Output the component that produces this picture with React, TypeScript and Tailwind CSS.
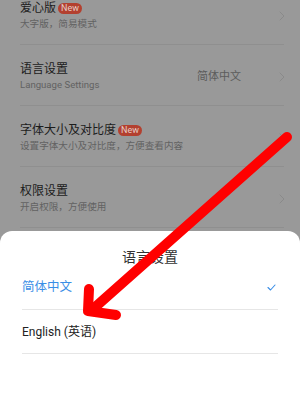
import React from 'react';

type Row = {
  title: string;
  sub: string;
  badge?: boolean;
  value?: string;
};

const rows: Row[] = [
  { title: '爱心版', sub: '大字版，简易模式', badge: true },
  { title: '语言设置', sub: 'Language Settings', value: '简体中文' },
  { title: '字体大小及对比度', sub: '设置字体大小及对比度，方便查看内容', badge: true },
  { title: '权限设置', sub: '开启权限，方便使用' },
];

function Chevron() {
  return (
    <svg width="6" height="10" viewBox="0 0 6 10" fill="none" className="shrink-0">
      <path d="M1 1l4 4-4 4" stroke="#8a8a8a" strokeWidth="1" strokeLinecap="round" strokeLinejoin="round" />
    </svg>
  );
}

function SettingRow({ row, first }: { row: Row; first: boolean }) {
  return (
    <div
      className={`flex items-center border-b border-[#8f8f8f] pb-[13px] ${first ? 'pt-[1px]' : 'pt-[17px]'}`}>
      <div className="flex-1 min-w-0">
        <div className="flex items-center h-[14px]">
          <span className="text-[12px] leading-[14px] text-[#1c1c1c]">{row.title}</span>
          {row.badge && (
            <span className="ml-[2px] h-[11px] px-[3px] rounded-full bg-[#b3402f] text-[#e6cdc6] text-[9px] leading-[11px]">
              New
            </span>
          )}
        </div>
        <div className="mt-[2px] text-[9.6px] leading-[14px] text-[#626262]">{row.sub}</div>
      </div>
      {row.value && (
        <span className="mr-[38px] text-[11px] text-[#5c5c5c]">{row.value}</span>
      )}
      <div className="-mr-[1px]">
        <Chevron />
      </div>
    </div>
  );
}

export default function App() {
  return (
    <div
      className="relative w-[300px] h-[400px] overflow-hidden bg-[#999999] flex flex-col"
      style={{ fontFamily: 'Roboto, "Noto Sans CJK SC", sans-serif' }}>
      <div className="pl-[20px] pr-[16px]">
        {rows.map((r, i) => (
          <SettingRow key={r.title} row={r} first={i === 0} />
        ))}
      </div>

      <div className="mt-[3px] flex-1 bg-white rounded-t-[12px] pt-[19px] px-[22px]">
        <div className="text-center text-[14px] leading-[14px] text-[#333]">语言设置</div>
        <div className="mt-[2px] h-[44px] flex items-center justify-between border-b border-[#e6e6e6]">
          <span className="text-[12.5px] text-[#3a8ee6]">简体中文</span>
          <svg width="9" height="7" viewBox="0 0 9 7" fill="none" className="mr-[2px]">
            <path d="M1 3.5l2.5 2.5L8 1" stroke="#3a8ee6" strokeWidth="1.1" strokeLinecap="round" strokeLinejoin="round" />
          </svg>
        </div>
        <div className="h-[44px] flex items-center border-b border-[#e6e6e6]">
          <span className="text-[12px] text-[#222]">English (英语)</span>
        </div>
      </div>

      <svg
        className="absolute inset-0 pointer-events-none"
        width="300"
        height="400"
        viewBox="0 0 300 400">
        <line x1="287" y1="137" x2="93" y2="309" stroke="#ff0000" strokeWidth="10" strokeLinecap="round" />
        <polyline
          points="89,289 88,311 116,315"
          fill="none"
          stroke="#ff0000"
          strokeWidth="10"
          strokeLinecap="round"
          strokeLinejoin="round"
        />
      </svg>
    </div>
  );
}
